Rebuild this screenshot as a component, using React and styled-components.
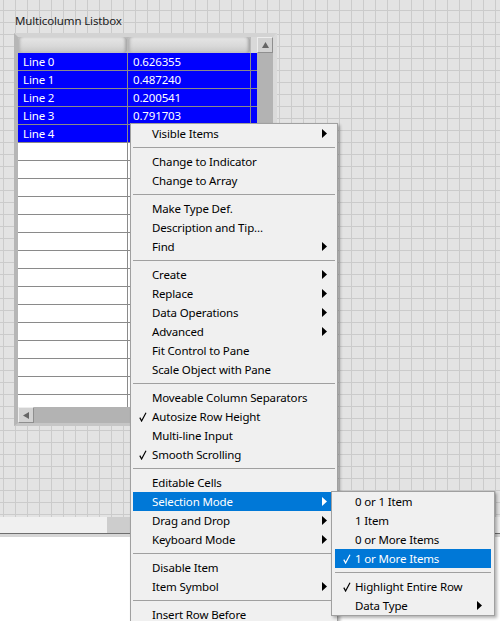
import React from "react";
import styled, { createGlobalStyle } from "styled-components";

const GlobalStyle = createGlobalStyle`
  html, body {
    margin: 0;
    padding: 0;
    background: #ffffff;
  }
  body {
    font-family: "Noto Sans", "Segoe UI", sans-serif;
    font-size: 11.5px;
    letter-spacing: -0.15px;
    overflow: hidden;
  }
`;

// the value of the last row sits under the popup menu
const listRows = [
  ["Line 0", "0.626355"],
  ["Line 1", "0.487240"],
  ["Line 2", "0.200541"],
  ["Line 3", "0.791703"],
  ["Line 4", ""],
];

const TOTAL_ROWS = 20;

const SEP = "sep";

const contextMenu = [
  { label: "Visible Items", sub: true },
  SEP,
  { label: "Change to Indicator" },
  { label: "Change to Array" },
  SEP,
  { label: "Make Type Def." },
  { label: "Description and Tip..." },
  { label: "Find", sub: true },
  SEP,
  { label: "Create", sub: true },
  { label: "Replace", sub: true },
  { label: "Data Operations", sub: true },
  { label: "Advanced", sub: true },
  { label: "Fit Control to Pane" },
  { label: "Scale Object with Pane" },
  SEP,
  { label: "Moveable Column Separators" },
  { label: "Autosize Row Height", checked: true },
  { label: "Multi-line Input" },
  { label: "Smooth Scrolling", checked: true },
  SEP,
  { label: "Editable Cells" },
  { label: "Selection Mode", sub: true, open: true },
  { label: "Drag and Drop", sub: true },
  { label: "Keyboard Mode", sub: true },
  SEP,
  { label: "Disable Item" },
  { label: "Item Symbol", sub: true },
  SEP,
  { label: "Insert Row Before" },
];

const selectionMenu = [
  { label: "0 or 1 Item" },
  { label: "1 Item" },
  { label: "0 or More Items" },
  { label: "1 or More Items", checked: true, active: true },
  SEP,
  { label: "Highlight Entire Row", checked: true },
  { label: "Data Type", sub: true },
];

const Screen = styled.div`
  position: relative;
  width: 500px;
  height: 621px;
  display: flex;
  flex-direction: column;
  overflow: hidden;
`;

const Canvas = styled.div`
  flex: none;
  height: 517px;
  box-sizing: border-box;
  padding: 13px 0 0 14px;
  background-color: #e3e3e3;
  background-image: linear-gradient(to right, #cbcbcb 1px, transparent 1px),
    linear-gradient(to bottom, #cbcbcb 1px, transparent 1px);
  background-size: 12px 12px;
  background-position: 3px 10px;
`;

const Label = styled.div`
  margin-left: 1px;
  height: 16px;
  line-height: 16px;
  margin-bottom: 4px;
  color: #1b1b1b;
`;

const Frame = styled.div`
  width: 263px;
  box-sizing: border-box;
  border-style: solid;
  border-width: 4px 4px 3px 4px;
  border-color: #d3d3d3 #dadada #c6c6c6 #b6b6b6;
  display: grid;
  grid-template-columns: 239px 16px;
  grid-template-rows: 16px 354px 16px;
`;

const Header = styled.div`
  display: flex;
  gap: 1px;
  background: #b9b9b9;
`;

const HeaderCell = styled.div`
  width: ${(p) => p.$w}px;
  height: 16px;
  border-radius: 3px;
  background: linear-gradient(#e6e6e6, #d9d9d9 55%, #c6c6c6);
  box-shadow: inset 3px 0 3px -1px #b2b2b2, inset -3px 0 3px -1px #a4a4a4;
`;

const HeaderFill = styled.div`
  flex: 1;
  background: #d9d9d9;
`;

const ArrowButton = styled.div`
  box-sizing: border-box;
  width: 16px;
  height: 16px;
  display: flex;
  align-items: center;
  justify-content: center;
  background: #d2d2d2;
  border: 1px solid;
  border-color: #ededed #8f8f8f #8f8f8f #ededed;
`;

const Body = styled.div`
  overflow: hidden;
  background: #ffffff;
`;

const Row = styled.div`
  display: grid;
  grid-template-columns: 110px 123px 6px;
  height: 18px;
`;

const Cell = styled.div`
  box-sizing: border-box;
  height: 18px;
  padding-left: 5px;
  line-height: 17px;
  white-space: nowrap;
  overflow: hidden;
  border-bottom: 1px solid #8a8a8a;
  border-right: ${(p) => (p.$last ? "none" : "1px solid #8a8a8a")};
  background: ${(p) => (p.$selected ? "#0000ff" : "#ffffff")};
  color: ${(p) => (p.$selected ? "#ffffff" : "#000000")};
`;

const Track = styled.div`
  flex: 1;
  background: #b3b3b3;
`;

const HScroll = styled.div`
  display: flex;
`;

const Corner = styled.div`
  background: #c9c9c9;
`;

const WindowScroll = styled.div`
  flex: none;
  height: 16px;
  background: #f0f0f0;
  border-bottom: 1px solid #6e6e6e;
  display: flex;
`;

const Thumb = styled.div`
  margin-left: 107px;
  width: 70px;
  background: #cdcdcd;
`;

const WindowEdge = styled.div`
  flex: none;
  height: 3px;
  background: #d6d6d6;
`;

const Below = styled.div`
  flex: 1;
  background: #ffffff;
`;

const Menu = styled.div`
  position: absolute;
  left: ${(p) => p.$left}px;
  top: ${(p) => p.$top}px;
  width: ${(p) => p.$width}px;
  box-sizing: border-box;
  padding: 0 ${(p) => p.$pad}px;
  background: #f0f0f0;
  border: 1px solid #a0a0a0;
  box-shadow: 2px 2px 3px rgba(0, 0, 0, 0.3);
  z-index: ${(p) => p.$z};
`;

const Item = styled.div`
  position: relative;
  height: 19px;
  line-height: 19px;
  padding-left: ${(p) => p.$indent}px;
  white-space: nowrap;
  color: ${(p) => (p.$active ? "#ffffff" : "#000000")};
  background: ${(p) => (p.$active ? "#0078d7" : "transparent")};
`;

const Separator = styled.div`
  height: 9px;
  display: flex;
  align-items: center;

  &::before {
    content: "";
    flex: 1;
    height: 1px;
    background: #a0a0a0;
  }
`;

const Check = styled.svg`
  position: absolute;
  left: ${(p) => p.$left}px;
  top: 5px;
`;

const SubArrow = styled.svg`
  position: absolute;
  right: ${(p) => p.$right}px;
  top: 5px;
`;

function CheckMark({ left, color }) {
  return (
    <Check $left={left} width="8" height="10" viewBox="0 0 8 10">
      <polyline
        points="0.8,5.6 2.6,9 7,0.8"
        fill="none"
        stroke={color}
        strokeWidth="1.2"
      />
    </Check>
  );
}

function Arrow({ right, color }) {
  return (
    <SubArrow $right={right} width="5" height="9" viewBox="0 0 5 9">
      <polygon points="0,0 5,4.5 0,9" fill={color} />
    </SubArrow>
  );
}

function MenuItems({ items, indent, checkLeft, arrowRight, children }) {
  return items.map((item, i) => {
    if (item === SEP) return <Separator key={i} />;
    const active = item.active || item.open;
    const ink = active ? "#ffffff" : "#000000";
    return (
      <Item key={i} $indent={indent} $active={active}>
        {item.checked && <CheckMark left={checkLeft} color={ink} />}
        {item.label}
        {item.sub && <Arrow right={arrowRight} color={ink} />}
        {item.open && children}
      </Item>
    );
  });
}

function Listbox() {
  return (
    <Frame>
      <Header>
        <HeaderCell $w={109} />
        <HeaderCell $w={122} />
        <HeaderFill />
      </Header>
      <ArrowButton>
        <svg width="7" height="6" viewBox="0 0 7 6">
          <polygon points="3.5,0 7,6 0,6" fill="#666666" />
        </svg>
      </ArrowButton>
      <Body>
        {Array.from({ length: TOTAL_ROWS }).map((_, i) => {
          const data = listRows[i];
          const sel = Boolean(data);
          return (
            <Row key={i}>
              <Cell $selected={sel}>{data ? data[0] : ""}</Cell>
              <Cell $selected={sel}>{data ? data[1] : ""}</Cell>
              <Cell $selected={sel} $last />
            </Row>
          );
        })}
      </Body>
      <Track />
      <HScroll>
        <ArrowButton>
          <svg width="6" height="7" viewBox="0 0 6 7">
            <polygon points="0,3.5 6,0 6,7" fill="#666666" />
          </svg>
        </ArrowButton>
        <Track />
      </HScroll>
      <Corner />
    </Frame>
  );
}

export default function App() {
  return (
    <>
      <GlobalStyle />
      <Screen>
        <Canvas>
          <Label>Multicolumn Listbox</Label>
          <Listbox />
        </Canvas>
        <WindowScroll>
          <Thumb />
        </WindowScroll>
        <WindowEdge />
        <Below />

        <Menu $left={130} $top={123} $width={208} $pad={2} $z={2}>
          <MenuItems items={contextMenu} indent={19} checkLeft={6} arrowRight={8}>
            <Menu $left={198} $top={-1} $width={164} $pad={3} $z={3}>
              <MenuItems
                items={selectionMenu}
                indent={20}
                checkLeft={8}
                arrowRight={9}
              />
            </Menu>
          </MenuItems>
        </Menu>
      </Screen>
    </>
  );
}
